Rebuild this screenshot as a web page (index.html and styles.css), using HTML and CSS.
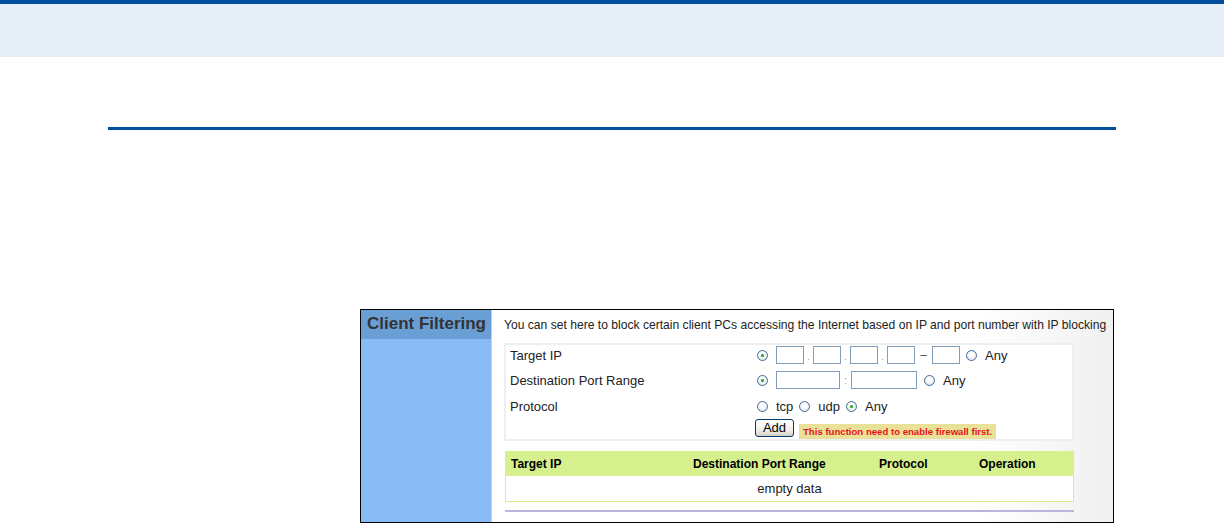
FILE: index.html
```html
<!DOCTYPE html>
<html>
<head>
<meta charset="utf-8">
<link rel="stylesheet" href="styles.css">
</head>
<body>
<div class="topbar"></div>
<div class="rule"></div>
<div class="shot">
  <div class="side">
    <div class="side-head">Client Filtering</div>
  </div>
  <div class="main">
    <div class="desc">You can set here to block certain client PCs accessing the Internet based on IP and port number with IP blocking</div>
    <div class="form">
      <div class="row r1">
        <div class="label">Target IP</div>
        <div class="ctrl">
          <span class="radio on"></span>
          <input class="box ip" type="text"><span class="sep">.</span><input class="box ip" type="text"><span class="sep">.</span><input class="box ip" type="text"><span class="sep">.</span><input class="box ip" type="text"><span class="sep dash">–</span><input class="box ip" type="text">
          <span class="radio after"></span><span class="opt">Any</span>
        </div>
      </div>
      <div class="row r2">
        <div class="label">Destination Port Range</div>
        <div class="ctrl">
          <span class="radio on"></span>
          <input class="box port1" type="text"><span class="sep colon">:</span><input class="box port2" type="text">
          <span class="radio after2"></span><span class="opt">Any</span>
        </div>
      </div>
      <div class="row r3">
        <div class="label">Protocol</div>
        <div class="ctrl">
          <span class="radio"></span><span class="opt">tcp</span>
          <span class="radio mid"></span><span class="opt">udp</span>
          <span class="radio on mid"></span><span class="opt">Any</span>
        </div>
      </div>
      <div class="row r4">
        <div class="label"></div>
        <div class="ctrl ctrl-btn">
          <button class="add">Add</button>
          <span class="warn">This function need to enable firewall first.</span>
        </div>
      </div>
    </div>
    <div class="table">
      <div class="thead">
        <div class="c1">Target IP</div>
        <div class="c2">Destination Port Range</div>
        <div class="c3">Protocol</div>
        <div class="c4">Operation</div>
      </div>
      <div class="tbody">empty data</div>
    </div>
    <div class="purple"></div>
  </div>
</div>
</body>
</html>
```

FILE: styles.css
```css
* { box-sizing: border-box; }
html, body { margin: 0; padding: 0; background: #fff; }
body { font-family: "Liberation Sans", Arial, sans-serif; width: 1224px; height: 523px; overflow: hidden; }

.topbar {
  height: 57px;
  background: #e5edf6;
  border-top: 4px solid #004f9d;
}
.rule {
  margin: 70px 0 0 108px;
  width: 1008px;
  height: 3px;
  background: #004f9d;
}
.shot {
  margin: 179px 0 0 360px;
  width: 754px;
  height: 214px;
  border: 1px solid #000;
  display: flex;
}
.side {
  width: 131px;
  background: #88bbf5;
  border-right: 1px solid #b4d4fa;
  flex-shrink: 0;
}
.side-head {
  height: 29px;
  background: #6a9fd6;
  color: #333;
  font-weight: bold;
  font-size: 17px;
  line-height: 27px;
  padding-left: 6px;
  white-space: nowrap;
}
.main {
  flex: 1;
  background: linear-gradient(to right, #fff 78%, #f0f0f0);
  padding-left: 12px;
}
.desc {
  font-size: 12.12px;
  color: #222;
  height: 33px;
  line-height: 30px;
  white-space: nowrap;
}
.form {
  width: 570px;
  height: 98px;
  border: 2px solid #efefef;
  background: #fff;
  padding-top: 0;
}
.row {
  display: flex;
  align-items: center;
  height: 20px;
}
.r2 { margin-top: 5px; }
.r3 { margin-top: 6px; }
.r4 { margin-top: 2px; }
.label {
  width: 249px;
  padding-left: 4px;
  font-size: 13px;
  color: #222;
  white-space: nowrap;
}
.ctrl {
  display: flex;
  align-items: center;
  font-size: 13px;
  color: #222;
}
.radio {
  width: 11px;
  height: 11px;
  border-radius: 50%;
  border: 1px solid #3f6d9c;
  background: radial-gradient(circle at 50% 40%, #ffffff 30%, #d6d8dc 100%);
  margin-left: 2px;
  margin-right: 8px;
  position: relative;
  flex-shrink: 0;
}
.radio.on::after {
  content: "";
  position: absolute;
  left: 3px;
  top: 3px;
  width: 3px;
  height: 3px;
  border-radius: 50%;
  background: #2fa83a;
  box-shadow: 0 0 1px #6cd06c;
}
.radio.after { margin-left: 6px; }
.radio.after2 { margin-left: 7px; }
.radio.mid { margin-left: 6px; }
.box {
  height: 18px;
  border: 1px solid #7f9db9;
  background: #fff;
  padding: 0;
  margin: 0;
  font: inherit;
  outline: none;
}
.ip { width: 28px; }
.port1 { width: 64px; }
.port2 { width: 66px; }
.sep {
  width: 9px;
  text-align: center;
  color: #a0a0a0;
  font-size: 10px;
  line-height: 18px;
  padding-top: 4px;
}
.sep.dash {
  width: 17px;
  color: #555;
  font-size: 12px;
  padding-top: 0;
}
.sep.colon {
  width: 11px;
  padding-top: 0;
  font-size: 11px;
}
.opt { white-space: nowrap; }
.ctrl-btn { margin-left: 0; align-items: flex-end; }
.add {
  width: 39px;
  height: 18px;
  border: 1px solid #003c74;
  border-radius: 3px;
  background: linear-gradient(#ffffff, #f0f0ea 60%, #d6d0c5);
  font-family: "Liberation Sans", Arial, sans-serif;
  font-size: 13px;
  color: #000;
  padding: 0;
  line-height: 14px;
}
.warn {
  margin-left: 5px;
  margin-bottom: -2px;
  width: 197px;
  height: 15px;
  background: #e8e197;
  color: #e8121a;
  font-weight: bold;
  font-size: 9.6px;
  line-height: 15px;
  padding-left: 4px;
  white-space: nowrap;
}
.table {
  margin-top: 10px;
  width: 569px;
  margin-left: 1px;
}
.thead {
  display: grid;
  grid-template-columns: 182px 186px 100px 101px;
  height: 25px;
  background: #d5f08d;
  align-items: center;
  font-weight: bold;
  font-size: 12px;
  color: #000;
}
.thead div { padding-left: 6px; white-space: nowrap; }
.tbody {
  height: 26px;
  border: 1px solid #d5f08d;
  border-top: none;
  background: #fff;
  text-align: center;
  font-size: 13px;
  color: #222;
  line-height: 26px;
}
.purple {
  margin-top: 8px;
  margin-left: 1px;
  width: 569px;
  height: 2px;
  background: #b9b5dd;
}
```
